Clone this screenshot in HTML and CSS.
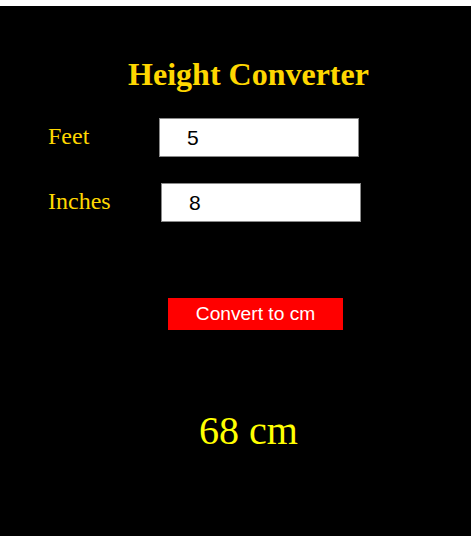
FILE: index.html
```html
<!DOCTYPE html>
<html lang="en">
<head>
<meta charset="utf-8">
<title>Height Converter</title>
<link rel="stylesheet" href="styles.css">
</head>
<body>
<div class="app">
  <h1 class="title">Height Converter</h1>
  <div class="form">
    <div class="row">
      <label class="label" for="feet">Feet</label>
      <input class="field" id="feet" type="text" value="5">
    </div>
    <div class="row">
      <label class="label" for="inches">Inches</label>
      <input class="field field-inches" id="inches" type="text" value="8">
    </div>
  </div>
  <div class="actions">
    <button class="convert" type="button">Convert to cm</button>
  </div>
  <div class="result">68 cm</div>
</div>
</body>
</html>
```

FILE: styles.css
```css
html, body {
  margin: 0;
  padding: 0;
  background: #ffffff;
}

.app {
  margin-top: 6px;
  min-height: 530px;
  background: #000000;
  padding: 50px 0 0 26px;
  box-sizing: border-box;
  font-family: "Liberation Serif", "Times New Roman", serif;
}

.title {
  margin: 0;
  font-size: 32px;
  line-height: 36px;
  font-weight: bold;
  color: #ffd700;
  text-align: center;
}

.form {
  margin-top: 26px;
  padding-left: 22px;
  display: flex;
  flex-direction: column;
  gap: 26px;
}

.row {
  display: flex;
  align-items: flex-start;
}

.label {
  width: 111px;
  flex: none;
  margin-top: 5px;
  font-size: 24px;
  line-height: 27px;
  color: #ffd700;
}

.field {
  box-sizing: border-box;
  width: 200px;
  height: 39px;
  margin: 0;
  padding: 0 0 0 27px;
  border: 1px solid #8a8a8a;
  border-radius: 0;
  background: #ffffff;
  color: #000000;
  font-family: "Liberation Sans", Arial, sans-serif;
  font-size: 21px;
  outline: none;
}

.field-inches {
  margin-left: 2px;
}

.actions {
  margin-top: 76px;
  text-align: center;
}

.convert {
  margin: 0 0 0 14px;
  width: 175px;
  height: 32px;
  padding: 0;
  border: none;
  border-radius: 0;
  background: #ff0000;
  color: #ffffff;
  font-family: "Liberation Sans", Arial, sans-serif;
  font-size: 19.2px;
  line-height: 22px;
  cursor: pointer;
}

.result {
  margin-top: 78px;
  text-align: center;
  font-size: 40px;
  line-height: 46px;
  color: #ffff00;
}
```
